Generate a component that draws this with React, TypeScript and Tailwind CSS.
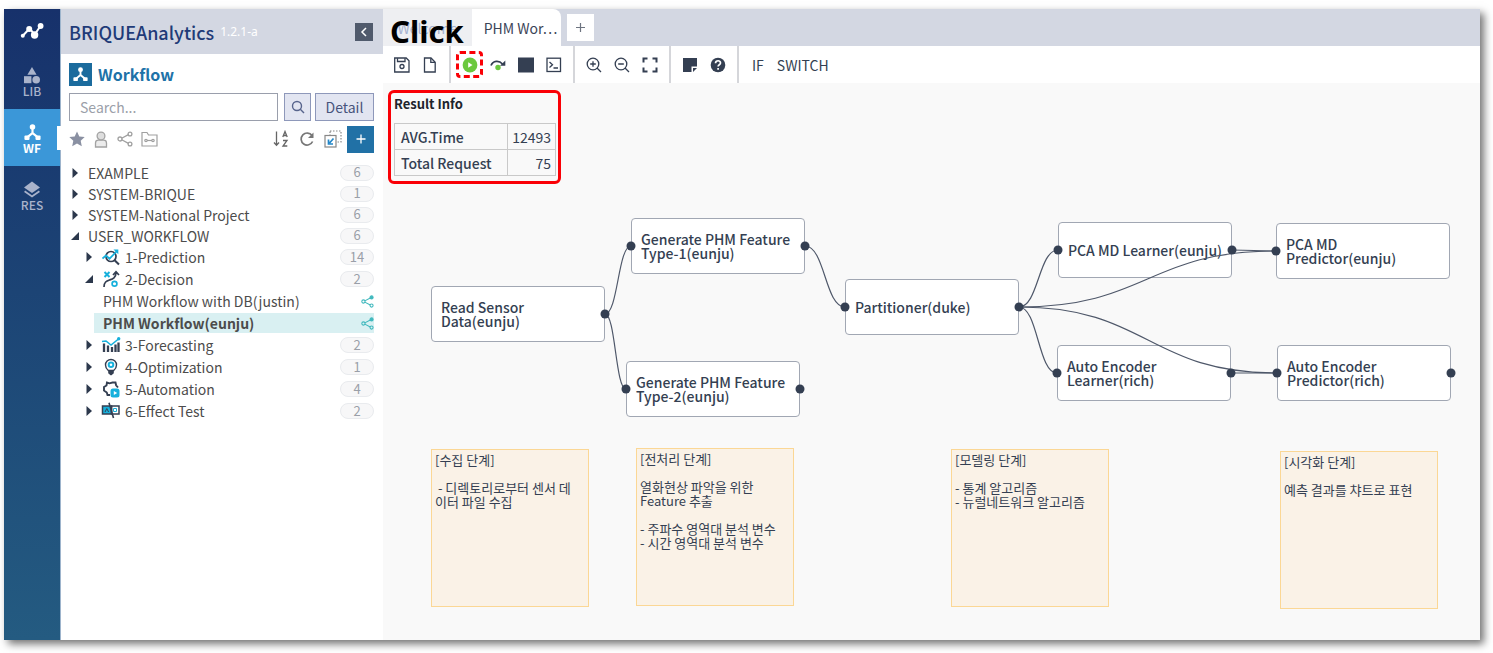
import type { ReactNode } from "react";

const ink = "#343f52";

/* ---------- icons ---------- */

function WorkflowGlyph({ size }: { size: number }) {
  return (
    <svg width={size} height={size} viewBox="0 0 16 16" fill="currentColor" aria-hidden="true">
      <circle cx="8" cy="2.8" r="2.6" />
      <path d="M7 4h2v4l4.4 3.6-1.2 1.6L8 9.9l-4.2 3.3-1.2-1.6L7 8z" />
      <rect x="0.4" y="10.8" width="4.8" height="4.2" rx="1" />
      <rect x="10.8" y="10.8" width="4.8" height="4.2" rx="1" />
    </svg>
  );
}

function LogoMark() {
  return (
    <svg width="24" height="18" viewBox="0 0 24 18" aria-hidden="true">
      <path d="M3 13.500 9.600 6.500l5 6L20.500 4" fill="none" stroke="#fff" strokeWidth="2" />
      <circle cx="2.800" cy="13.800" r="2" fill="#fff" />
      <circle cx="9.200" cy="7" r="3" fill="#fff" />
      <circle cx="14.600" cy="13" r="3.700" fill="#fff" />
      <circle cx="20.600" cy="4" r="2.900" fill="#fff" />
    </svg>
  );
}

function LibraryGlyph() {
  return (
    <svg width="18" height="17" viewBox="0 0 18 17" fill="currentColor" aria-hidden="true">
      <path d="M9 0l4.6 7.8H4.4z" />
      <rect x="1" y="9.2" width="7.4" height="7" />
      <circle cx="13.2" cy="12.7" r="3.8" />
    </svg>
  );
}

function LayersGlyph() {
  return (
    <svg width="18" height="17" viewBox="0 0 18 17" aria-hidden="true">
      <path d="M9 .5 17 6.500 9 12 1 6.500z" fill="currentColor" />
      <path d="M1.600 10.200 9 15.500l7.400-5.300" fill="none" stroke="currentColor" strokeWidth="1.800" />
    </svg>
  );
}

function ShareGlyph({ size, color, solid }: { size: number; color: string; solid?: boolean }) {
  return (
    <svg width={size} height={size} viewBox="0 0 16 16" fill="none" stroke={color} strokeWidth="1.300" aria-hidden="true">
      <path d="M4.700 7.200 11.400 3.600M4.700 8.800l6.700 3.600" />
      <circle cx="3" cy="8" r="2" />
      <circle cx="13" cy="3" r="1.900" fill={solid ? color : "none"} />
      <circle cx="13" cy="13" r="1.900" />
    </svg>
  );
}

function PredictionIcon() {
  return (
    <svg width="18" height="18" viewBox="0 0 18 18" fill="none" aria-hidden="true">
      <circle cx="9" cy="8.500" r="5" stroke={ink} strokeWidth="1.700" />
      <path d="M12.600 12.200 17 16.500" stroke={ink} strokeWidth="2" />
      <path d="M.5 10.500 4 7.500l3.500 3.200L15 3" stroke="#16b0dc" strokeWidth="1.700" />
      <path d="M11.500 1.500h4.800v4.800z" fill="#16b0dc" />
    </svg>
  );
}

function DecisionIcon() {
  return (
    <svg width="18" height="18" viewBox="0 0 18 18" fill="none" aria-hidden="true">
      <path d="M2.500 2l5 5M7.500 2l-5 5" stroke="#16b0dc" strokeWidth="2" />
      <circle cx="12.500" cy="13.800" r="2.400" stroke="#16b0dc" strokeWidth="1.700" />
      <path d="M2 17c0-5 2.500-6 5.500-7S14 8 14 2.500M11 5l3-3.200L17 5" stroke={ink} strokeWidth="1.700" />
    </svg>
  );
}

function ForecastIcon() {
  return (
    <svg width="20" height="18" viewBox="0 0 20 18" fill="none" aria-hidden="true">
      <path d="M3 7.500V16M7 9.500V16M11 11v5M14.500 8.500V16M17.500 6.500V16" stroke={ink} strokeWidth="2.300" />
      <path d="M1 5.500 5 5l5 4 7.500-6" stroke="#16b0dc" strokeWidth="1.600" />
      <circle cx="17.700" cy="2.800" r="1.700" fill="#16b0dc" />
    </svg>
  );
}

function OptimizationIcon() {
  return (
    <svg width="18" height="18" viewBox="0 0 18 18" fill="none" aria-hidden="true">
      <path d="M6.300 12.500C4.500 11 3.500 9.200 3.500 7a5.500 5.500 0 0 1 11 0c0 2.200-1 4-2.800 5.500z" stroke={ink} strokeWidth="1.400" />
      <circle cx="9" cy="6.800" r="2.300" stroke="#16b0dc" strokeWidth="2" />
      <path d="M6.200 12.500h5.600v2.800L9.500 17.200h-1l-2.300-1.900z" fill={ink} />
    </svg>
  );
}

function AutomationIcon() {
  return (
    <svg width="18" height="18" viewBox="0 0 18 18" fill="none" aria-hidden="true">
      <path d="M8 15H5.500L4.800 12.500 2 10.500V7L4.500 5.500 5 2.500l2.500.8 3-.8 3 0 .6 2.800L16 7.500" stroke={ink} strokeWidth="1.900" />
      <rect x="8.500" y="8.500" width="9" height="9" rx="2.500" fill="#16b0dc" />
      <path d="M11.800 11v4l3.400-2z" fill="#fff" />
    </svg>
  );
}

function EffectIcon() {
  return (
    <svg width="20" height="18" viewBox="0 0 20 18" fill="none" aria-hidden="true">
      <rect x="1.500" y="4" width="9" height="8" fill="#16b0dc" stroke={ink} strokeWidth="1.500" />
      <rect x="10.500" y="4" width="7.500" height="8" stroke={ink} strokeWidth="1.500" />
      <path d="M4 10l1.800-3.500L7.600 10" stroke={ink} />
      <path d="M12.500 6.500h3v3h-3z" stroke="#16b0dc" />
      <path d="M8 .8 12.500 16" stroke={ink} strokeWidth="1.600" />
    </svg>
  );
}

/* ---------- left rail ---------- */

function RailItem({ label, active, children }: { label: string; active?: boolean; children: ReactNode }) {
  return (
    <button
      type="button"
      className={
        active
          ? "relative flex h-[57px] w-full flex-col items-center justify-center bg-[#3b97d8] pt-1 text-xs leading-[14px] font-bold text-white"
          : "relative flex h-[57px] w-full flex-col items-center justify-center pt-1 text-xs leading-[14px] font-medium text-[#a9b3cb]"
      }
    >
      {children}
      <span>{label}</span>
      {active && <span className="absolute top-[17px] -right-px h-6 w-1 bg-white" />}
    </button>
  );
}

function Rail() {
  return (
    <nav className="flex w-[57px] shrink-0 flex-col border-r border-[#9db4cc] bg-linear-to-b from-[#17316b] to-[#245b81]">
      <a href="#home" aria-label="Home" className="flex h-[43px] items-center justify-center">
        <LogoMark />
      </a>
      <RailItem label="LIB">
        <LibraryGlyph />
      </RailItem>
      <RailItem label="WF" active>
        <WorkflowGlyph size={17} />
      </RailItem>
      <RailItem label="RES">
        <LayersGlyph />
      </RailItem>
    </nav>
  );
}

/* ---------- workflow tree ---------- */

function Caret({ open }: { open?: boolean }) {
  return (
    <svg width="12" height="12" viewBox="0 0 12 12" fill="#2c384c" className="shrink-0" aria-hidden="true">
      {open ? <path d="M10 2v8H2z" /> : <path d="M3.500 1l5.500 5-5.500 5z" />}
    </svg>
  );
}

function Count({ value }: { value: number }) {
  return (
    <span className="ml-auto flex h-4 w-[34px] items-center justify-center rounded-full border border-[#e9ebee] bg-[#f7f7f8] text-[13px] text-[#9a9fa8]">
      {value}
    </span>
  );
}

function Folder({ label, count, open }: { label: string; count: number; open?: boolean }) {
  return (
    <button type="button" className="flex h-[21px] w-full items-center gap-[7px] text-left">
      <Caret open={open} />
      <span>{label}</span>
      <Count value={count} />
    </button>
  );
}

function SubFolder({ label, count, open, icon }: { label: string; count: number; open?: boolean; icon: ReactNode }) {
  return (
    <button type="button" className="flex h-[22px] w-full items-center pl-[14px] text-left">
      <Caret open={open} />
      <span className="ml-1.5 flex w-5 justify-center">{icon}</span>
      <span className="ml-1">{label}</span>
      <Count value={count} />
    </button>
  );
}

function Leaf({ label, selected }: { label: string; selected?: boolean }) {
  return (
    <div className="flex h-[22px] items-center pl-[25px]">
      <a
        href="#workflow"
        className={
          selected
            ? "flex h-5 flex-1 items-center justify-between bg-[#d9f0f2] pl-[9px] font-bold"
            : "flex h-5 flex-1 items-center justify-between pl-[9px]"
        }
      >
        <span>{label}</span>
        <ShareGlyph size={13} color="#3fb8bd" solid />
      </a>
    </div>
  );
}

function Sidebar() {
  return (
    <aside className="flex w-[322px] shrink-0 flex-col bg-white">
      <header className="flex h-[45px] items-center bg-[#d3d7e2] pr-[10px] pl-2">
        <h1 className="text-lg leading-6 font-medium text-[#1f3b78]">BRIQUEAnalytics</h1>
        <span className="ml-1.5 font-['Noto_Sans'] text-xs text-white">1.2.1-a</span>
        <button type="button" aria-label="Collapse sidebar" className="ml-auto flex size-[18px] items-center justify-center bg-[#505a6c] text-white">
          <svg width="8" height="10" viewBox="0 0 8 10" fill="none" stroke="currentColor" strokeWidth="1.500">
            <path d="M6 1 2 5l4 4" />
          </svg>
        </button>
      </header>

      <div className="pt-[9px] pr-[9px] pl-2">
        <div className="flex items-center gap-1.5">
          <span className="flex size-[23px] items-center justify-center bg-[#1b6b9d] text-white">
            <WorkflowGlyph size={15} />
          </span>
          <h2 className="text-base leading-[23px] font-bold text-[#2072a8]">Workflow</h2>
        </div>

        <div className="mt-[7px] flex h-7 items-stretch">
          <input
            type="text"
            aria-label="Search workflows"
            placeholder="Search..."
            className="min-w-0 flex-1 border border-[#9a9fac] pl-[10px] text-sm placeholder:text-[#9ba0a9]"
          />
          <button type="button" aria-label="Search" className="ml-1.5 flex w-[27px] items-center justify-center border border-[#8e98ba] bg-[#e2e5f1] text-[#57648c]">
            <svg width="14" height="14" viewBox="0 0 14 14" fill="none" stroke="currentColor" strokeWidth="1.400">
              <circle cx="6" cy="6" r="4.500" />
              <path d="M9.300 9.300 13 13" />
            </svg>
          </button>
          <button type="button" className="ml-1 w-[59px] border border-[#8e98ba] bg-[#e2e5f1] text-sm text-[#47547c]">
            Detail
          </button>
        </div>

        <div className="mt-1 flex h-7 items-center text-[#8f939b]">
          <button type="button" aria-label="Favourites" className="flex w-4 justify-center">
            <svg width="16" height="16" viewBox="0 0 16 16" fill="#8a90a2">
              <path d="M8 .5l2.300 5 5.400.6-4 3.700 1.100 5.400L8 12.500l-4.800 2.700 1.100-5.400-4-3.700 5.400-.6z" />
            </svg>
          </button>
          <button type="button" aria-label="Mine" className="ml-2 flex w-4 justify-center">
            <svg width="14" height="17" viewBox="0 0 14 17" fill="#ececec" stroke="#a3a3a3" strokeWidth="1.300">
              <path d="M1.500 16v-4c0-1.800 1.500-2.800 3-2.800h5c1.500 0 3 1 3 2.800v4z" />
              <circle cx="7" cy="5" r="3.900" fill="#dedede" />
            </svg>
          </button>
          <button type="button" aria-label="Shared" className="ml-2 flex w-4 justify-center">
            <ShareGlyph size={16} color="#a0a0a0" />
          </button>
          <button type="button" aria-label="Shared folders" className="ml-2 flex w-4 justify-center">
            <svg width="17" height="16" viewBox="0 0 17 16" fill="none" stroke="#a0a0a0" strokeWidth="1.200" className="shrink-0">
              <path d="M1 15V1.500h5L7.500 4H16v11z" />
              <path d="M6 9.500h5" />
              <circle cx="5" cy="9.500" r="1.200" />
              <circle cx="12" cy="9.500" r="1.200" />
            </svg>
          </button>
          <button type="button" aria-label="Sort by name" className="ml-auto flex w-4 justify-center">
            <svg width="16" height="18" viewBox="0 0 16 18" fill="none" stroke="#666" strokeWidth="1.300" className="shrink-0">
              <path d="M3.500 1.500v13M1 12.500l2.500 2.800L6 12.500" />
              <path d="M9.800 7 12 1.500 14.200 7M10.600 5.500h2.800M10 10.500h4l-4 5.500h4.300" />
            </svg>
          </button>
          <button type="button" aria-label="Refresh" className="ml-[10px] flex w-4 justify-center">
            <svg width="16" height="16" viewBox="0 0 16 16" fill="none" stroke="#777" strokeWidth="1.700">
              <path d="M13.600 10.500A6 6 0 1 1 13 4.500" />
              <path d="M14.500 1.500v5.500H9z" fill="#777" stroke="none" />
            </svg>
          </button>
          <button type="button" aria-label="Import" className="ml-[10px] flex w-4 justify-center">
            <svg width="18" height="18" viewBox="0 0 18 18" fill="none" className="shrink-0">
              <rect x="6" y="1" width="11" height="11" stroke="#888" strokeDasharray="1.500 1.500" strokeWidth="1.200" />
              <rect x="1" y="5.500" width="11" height="11.500" fill="#fff" stroke="#888" strokeWidth="1.200" />
              <path d="M9.500 8.500 5.500 13M4.500 9.500V14h4.500" stroke="#2387c8" strokeWidth="1.700" />
            </svg>
          </button>
          <button type="button" aria-label="New workflow" className="ml-[6px] flex size-[27px] items-center justify-center bg-[#2171a6] text-white">
            <svg width="10" height="10" viewBox="0 0 10 10" stroke="currentColor" strokeWidth="1.300">
              <path d="M5 .5v9M.5 5h9" />
            </svg>
          </button>
        </div>

        <div className="mt-[9px] text-sm text-[#4c4c4c]">
          <Folder label="EXAMPLE" count={6} />
          <Folder label="SYSTEM-BRIQUE" count={1} />
          <Folder label="SYSTEM-National Project" count={6} />
          <Folder label="USER_WORKFLOW" count={6} open />
          <SubFolder label="1-Prediction" count={14} icon={<PredictionIcon />} />
          <SubFolder label="2-Decision" count={2} icon={<DecisionIcon />} open />
          <Leaf label="PHM Workflow with DB(justin)" />
          <Leaf label="PHM Workflow(eunju)" selected />
          <SubFolder label="3-Forecasting" count={2} icon={<ForecastIcon />} />
          <SubFolder label="4-Optimization" count={1} icon={<OptimizationIcon />} />
          <SubFolder label="5-Automation" count={4} icon={<AutomationIcon />} />
          <SubFolder label="6-Effect Test" count={2} icon={<EffectIcon />} />
        </div>
      </div>
    </aside>
  );
}

/* ---------- tabs and toolbar ---------- */

function Tabs() {
  return (
    <div className="relative flex h-[37px] items-stretch bg-[#d3d7e2] text-sm">
      <button type="button" className="w-[89px] bg-[#eeeff2] text-[#a5b2d0]">
        Welcome
      </button>
      <button type="button" className="w-[89px] rounded-tr-lg bg-white pl-2 whitespace-nowrap text-[#3b4457]">
        PHM Wor⋯
      </button>
      <button type="button" aria-label="New tab" className="ml-1.5 flex size-[27px] items-center justify-center self-center bg-white text-[#6d7480]">
        <svg width="9" height="9" viewBox="0 0 9 9" stroke="currentColor" strokeWidth="1.200">
          <path d="M4.500 0v9M0 4.500h9" />
        </svg>
      </button>
      <strong className="absolute top-0 left-[7px] font-['Noto_Sans'] text-[31px] leading-[44px] text-black">Click</strong>
    </div>
  );
}

function Tool({ label, children }: { label: string; children: ReactNode }) {
  return (
    <button type="button" aria-label={label} title={label} className="relative flex h-full w-7 items-center justify-center">
      <svg width="18" height="18" viewBox="0 0 18 18" fill="none" stroke={ink} strokeWidth="1.300">
        {children}
      </svg>
    </button>
  );
}

function ToolGroup({ children }: { children: ReactNode }) {
  return <div className="relative flex border-r-2 border-[#d5d6da] px-[5px]">{children}</div>;
}

function Toolbar() {
  return (
    <div className="flex h-[37px] items-stretch bg-white text-sm text-[#343f52]">
      <ToolGroup>
        <Tool label="Save">
          <path d="M1.700 2h11.500l2.800 2.800V16H1.700z" />
          <path d="M4.500 2.200v3.300h7.500V2.200" />
          <circle cx="9" cy="10.500" r="2" />
        </Tool>
        <Tool label="New">
          <path d="M3.500 2h6.500l4.200 4.200V16H3.500z" />
          <path d="M9.800 2.200v4.200H14" />
        </Tool>
      </ToolGroup>
      <ToolGroup>
        <Tool label="Run">
          <circle cx="9" cy="9" r="7.400" fill="#6bc83e" stroke="none" />
          <path d="M7.200 6.200v5.600L11.500 9z" fill="#fff" stroke="none" />
        </Tool>
        <Tool label="Step over">
          <path d="M2 9.500C4 4.500 10 4 13.500 8" strokeWidth="1.700" />
          <path d="M16.300 4.500v5.300h-5.300z" fill={ink} stroke="none" />
          <circle cx="9" cy="11.500" r="2.700" fill="#6bc83e" stroke="none" />
        </Tool>
        <Tool label="Stop">
          <rect x="1" y="1.500" width="16" height="15" fill={ink} stroke="none" />
        </Tool>
        <Tool label="Console">
          <rect x="2" y="2.200" width="13.500" height="13.300" />
          <path d="M4.500 6 7.500 8.800l-3 2.800M8.500 12h4.500" />
        </Tool>
        <span className="pointer-events-none absolute top-[5px] left-[5px] size-[27px] rounded border-3 border-dashed border-[#fa0006]" />
      </ToolGroup>
      <ToolGroup>
        <Tool label="Zoom in">
          <circle cx="8" cy="8" r="5.800" />
          <path d="M12 12l4 4M8 5.200v5.600M5.200 8h5.600" />
        </Tool>
        <Tool label="Zoom out">
          <circle cx="8" cy="8" r="5.800" />
          <path d="M12 12l4 4M5.200 8h5.600" />
        </Tool>
        <Tool label="Fit to screen">
          <path d="M2.500 6.500v-4h4M11.500 2.500h4v4M15.500 11.500v4h-4M6.500 15.500h-4v-4" strokeWidth="2" />
        </Tool>
      </ToolGroup>
      <ToolGroup>
        <Tool label="Note">
          <path d="M2 2h14v8.500h-5.500V16H2zM12 12h4l-4 4z" fill={ink} stroke="none" />
        </Tool>
        <Tool label="Help">
          <circle cx="9" cy="9" r="7.300" fill={ink} stroke="none" />
          <path d="M6.500 7.200C6.700 3.900 11.600 4 11.500 7c0 1.800-2.400 1.800-2.400 3.600M9.100 12v1.800" stroke="#fff" strokeWidth="1.700" />
        </Tool>
      </ToolGroup>
      <button type="button" className="ml-[13px]">IF</button>
      <button type="button" className="ml-[13px]">SWITCH</button>
    </div>
  );
}

/* ---------- canvas ---------- */

type NodeBox = { x: number; y: number; label: string; input: boolean; output: boolean };

const nodes: NodeBox[] = [
  { x: 48, y: 203, label: "Read Sensor Data(eunju)", input: false, output: true },
  { x: 248, y: 135, label: "Generate PHM Feature Type-1(eunju)", input: true, output: true },
  { x: 243, y: 278, label: "Generate PHM Feature Type-2(eunju)", input: true, output: true },
  { x: 462, y: 196, label: "Partitioner(duke)", input: true, output: true },
  { x: 675, y: 139, label: "PCA MD Learner(eunju)", input: true, output: true },
  { x: 893, y: 140, label: "PCA MD Predictor(eunju)", input: true, output: false },
  { x: 674, y: 262, label: "Auto Encoder Learner(rich)", input: true, output: true },
  { x: 894, y: 262, label: "Auto Encoder Predictor(rich)", input: true, output: true },
];

const NODE_W = 174;
const NODE_MID = 28;

const links: [number, number][] = [
  [0, 1],
  [0, 2],
  [1, 3],
  [3, 4],
  [3, 5],
  [3, 6],
  [3, 7],
  [4, 5],
  [6, 7],
];

function linkPath([from, to]: [number, number]) {
  const x1 = nodes[from].x + NODE_W;
  const y1 = nodes[from].y + NODE_MID;
  const x2 = nodes[to].x;
  const y2 = nodes[to].y + NODE_MID;
  const mid = (x1 + x2) / 2;
  return `M${x1} ${y1}C${mid} ${y1} ${mid} ${y2} ${x2} ${y2}`;
}

const notes = [
  { x: 48, y: 366, text: "[수집 단계]\n\n - 디렉토리로부터 센서 데이터 파일 수집" },
  { x: 253, y: 365, text: "[전처리 단계]\n\n열화현상 파악을 위한\nFeature 추출\n\n- 주파수 영역대 분석 변수\n- 시간 영역대 분석 변수" },
  { x: 568, y: 366, text: "[모델링 단계]\n\n- 통계 알고리즘\n- 뉴럴네트워크 알고리즘" },
  { x: 897, y: 368, text: "[시각화 단계]\n\n예측 결과를 챠트로 표현" },
];

function ResultInfo() {
  return (
    <section className="absolute top-[7px] left-[5px] w-[173px] rounded-md border-3 border-[#fa0006] px-[3px] pt-[3px] pb-[5px]">
      <h3 className="text-[13px] leading-4 font-bold text-[#20242c]">Result Info</h3>
      <table className="mt-[11px] w-[162px] border-collapse text-sm text-[#343f52]">
        <tbody>
          <tr className="h-[26px]">
            <th scope="row" className="w-[114px] border border-[#c9c9c9] px-1.5 py-0 text-left leading-5 font-medium">AVG.Time</th>
            <td className="border border-[#c9c9c9] px-1 py-0 text-right leading-5">12493</td>
          </tr>
          <tr className="h-[26px]">
            <th scope="row" className="w-[114px] border border-[#c9c9c9] px-1.5 py-0 text-left leading-5 font-medium">Total Request</th>
            <td className="border border-[#c9c9c9] px-1 py-0 text-right leading-5">75</td>
          </tr>
        </tbody>
      </table>
    </section>
  );
}

function Canvas() {
  return (
    <div className="relative flex-1 overflow-hidden bg-[#f9f9f9] text-[#343f52]">
      <ResultInfo />
      {nodes.map((n) => (
        <div
          key={n.label}
          className="absolute flex h-14 w-[174px] items-center rounded border border-[#a1a7b3] bg-white pr-1 pl-[9px] text-sm leading-[14px] font-medium"
          style={{ left: n.x, top: n.y }}
        >
          {n.label}
        </div>
      ))}
      <svg className="pointer-events-none absolute inset-0 size-full" aria-hidden="true">
        {links.map((l) => (
          <path key={l.join("-")} d={linkPath(l)} fill="none" stroke="#4f586a" strokeWidth="1.200" />
        ))}
        {nodes.map((n) => (
          <g key={n.label} fill={ink}>
            {n.input && <circle cx={n.x} cy={n.y + NODE_MID} r="4.500" />}
            {n.output && <circle cx={n.x + NODE_W} cy={n.y + NODE_MID} r="4.500" />}
          </g>
        ))}
      </svg>
      {notes.map((n) => (
        <div
          key={n.text}
          className="absolute size-[158px] border border-[#fbd795] bg-[#faf2e7] pt-[3px] pr-[10px] pl-[3px] text-[13px] leading-[14px] break-all whitespace-pre-wrap"
          style={{ left: n.x, top: n.y }}
        >
          {n.text}
        </div>
      ))}
    </div>
  );
}

export default function App() {
  return (
    <div className="flex min-h-screen bg-white pt-[9px] pr-[13px] pb-[13px] pl-1 font-['Noto_Sans_CJK_KR',sans-serif]">
      <div className="flex min-w-0 flex-1 shadow-[4px_4px_8px_rgba(0,0,0,0.55)]">
        <Rail />
        <Sidebar />
        <main className="flex min-w-0 flex-1 flex-col">
          <Tabs />
          <Toolbar />
          <Canvas />
        </main>
      </div>
    </div>
  );
}
